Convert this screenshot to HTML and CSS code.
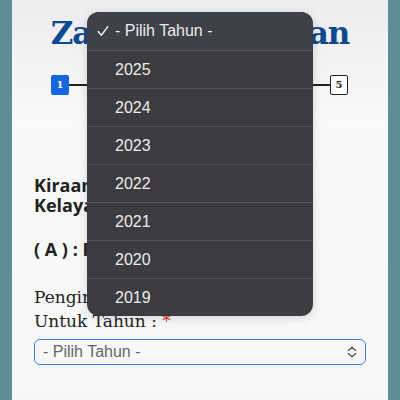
FILE: index.html
```html
<!DOCTYPE html>
<html lang="ms">
<head>
    <meta charset="UTF-8">
    <meta name="viewport" content="width=device-width, initial-scale=1.0">
    <title>Zakat Pendapatan</title>
    <link rel="stylesheet" href="styles.css">
</head>
<body>
    <div class="page">
        <h1 class="title">Zakat Pendapatan</h1>

        <div class="steps">
            <span class="step active">1</span>
            <span class="step-line"></span>
            <span class="step">2</span>
            <span class="step-line"></span>
            <span class="step">3</span>
            <span class="step-line"></span>
            <span class="step">4</span>
            <span class="step-line"></span>
            <span class="step">5</span>
        </div>

        <h2 class="section-title">Kiraan Zakat Pendapatan<br>Kelayakan Pengiraan</h2>
        <h3 class="part-title">( A ) : Pendapatan</h3>

        <label class="field-label">Pengiraan Zakat Pendapatan<br>Untuk Tahun : <span class="req">*</span></label>
        <div class="select-box">
            <span>- Pilih Tahun -</span>
            <svg class="chevron" width="10" height="12" viewBox="0 0 10 12">
                <path d="M1.5 4.5 L5 1.2 L8.5 4.5 M1.5 7.5 L5 10.8 L8.5 7.5" fill="none" stroke="#555" stroke-width="1.4" stroke-linecap="round" stroke-linejoin="round"/>
            </svg>
        </div>
    </div>

    <!-- senarai pilihan tahun (terbuka) -->
    <div class="picker">
        <div class="option selected">
            <svg class="tick" width="12" height="12" viewBox="0 0 12 12">
                <path d="M1.2 6.6 L4.4 10.2 L10.8 1.6" fill="none" stroke="#ececec" stroke-width="1.5" stroke-linecap="round" stroke-linejoin="round"/>
            </svg>- Pilih Tahun -</div>
        <div class="option">2025</div>
        <div class="option">2024</div>
        <div class="option">2023</div>
        <div class="option">2022</div>
        <div class="option">2021</div>
        <div class="option">2020</div>
        <div class="option">2019</div>
    </div>
</body>
</html>
```

FILE: styles.css
```css
body {
    margin: 0;
    padding: 0 12px;
    background: #5f8d95;
    font-family: "Open Sans", sans-serif;
    color: #222;
    height: 400px;
    overflow: hidden;
}

.page {
    background: linear-gradient(to bottom, #ececee, #f9f9fa 120px, #f7f7f7);
    height: 400px;
    padding: 0 22px;
}

.title {
    margin: 0;
    padding-top: 15px;
    text-align: center;
    font-family: "DejaVu Serif", serif;
    font-weight: bold;
    font-size: 31px;
    line-height: 36px;
    color: #0c4a90;
    letter-spacing: -1px;
}

.steps {
    display: flex;
    align-items: center;
    margin: 24px 18px 0 17px;
}

.step {
    width: 16px;
    height: 18px;
    border: 1px solid #222;
    border-radius: 2px;
    background: #fff;
    font-family: "DejaVu Serif", serif;
    font-size: 10px;
    font-weight: bold;
    line-height: 18px;
    text-align: center;
}

.step.active {
    background: #1565e0;
    border-color: #1565e0;
    color: #fff;
}

.step-line {
    flex: 1;
    height: 2px;
    background: #222;
}

.section-title {
    margin: 80px 0 0;
    font-size: 18px;
    font-weight: bold;
    line-height: 20px;
}

.part-title {
    margin: 22px 0 0;
    font-size: 18px;
    font-weight: bold;
    line-height: 24px;
}

.field-label {
    display: block;
    margin-top: 24px;
    font-family: "DejaVu Serif", serif;
    font-size: 17px;
    line-height: 24px;
    color: #222;
}

.req {
    color: #d33;
}

.select-box {
    display: flex;
    align-items: center;
    justify-content: space-between;
    margin-top: 6px;
    height: 24px;
    padding: 0 8px;
    border: 1px solid #3d7fd8;
    border-radius: 6px;
    background: #f8f8f8;
    font-family: "Liberation Sans", sans-serif;
    font-size: 16px;
    color: #666;
}

.picker {
    position: absolute;
    left: 87px;
    top: 12px;
    width: 226px;
    border-radius: 12px;
    overflow: hidden;
    background: #3c3c40;
    box-shadow: 0 2px 10px rgba(0, 0, 0, 0.15);
}

.option {
    height: 37px;
    line-height: 37px;
    padding-left: 28px;
    border-top: 1px solid #545458;
    font-family: "Liberation Sans", sans-serif;
    font-size: 16px;
    color: #ececec;
    position: relative;
}

.option.selected {
    border-top: none;
    height: 38px;
    line-height: 38px;
    background: #3e4148;
}

.tick {
    position: absolute;
    left: 10px;
    top: 13px;
}
```
